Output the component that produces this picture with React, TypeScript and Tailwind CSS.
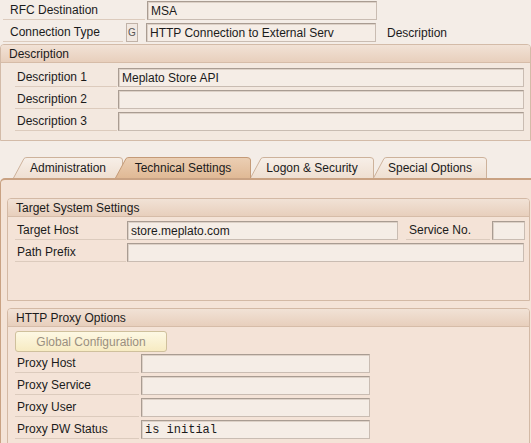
import React from "react";

const font = { fontFamily: '"Liberation Sans", Arial, sans-serif' };

function Field({ w, text, mono }: { w: string; text?: string; mono?: boolean }) {
  return (
    <div
      className={`${w} h-[19px] border border-t-[#a99c92] border-l-[#a99c92] border-r-[#c9bcb2] border-b-[#c9bcb2] bg-[#f5ede6] shadow-[inset_1px_1px_0_#ddd1c7] flex items-center pl-[3px] overflow-hidden whitespace-nowrap`}
    >
      {text && (
        <span
          className="text-[12px]"
          style={mono ? { fontFamily: '"Liberation Mono", "Courier New", monospace' } : undefined}
        >
          {text}
        </span>
      )}
    </div>
  );
}

function Label({ w, text, pl = "pl-[2px]" }: { w: string; text: string; pl?: string }) {
  return (
    <div className={`${w} h-[19px] border-b border-[#dccbbd] flex items-center ${pl} whitespace-nowrap`}>
      {text}
    </div>
  );
}

function GroupHeader({ title }: { title: string }) {
  return (
    <div className="h-[18px] flex items-center pl-[8px] bg-gradient-to-b from-[#f1e2d6] to-[#e8cfbc] border-b border-[#d6bca8] rounded-t-[3px]">
      {title}
    </div>
  );
}

function Tab({ label, w, active, ml, z }: { label: string; w: number; active?: boolean; ml: string; z: string }) {
  const h = 21;
  const s = 11;
  const id = active ? "ga" : "gi" + label.length;
  return (
    <div className={`relative ${ml} ${z} h-[21px] flex items-center justify-center`} style={{ width: w }}>
      <svg className="absolute inset-0" width={w} height={h} viewBox={`0 0 ${w} ${h}`}>
        <defs>
          <linearGradient id={id} x1="0" y1="0" x2="0" y2="1">
            <stop offset="0" stopColor={active ? "#ebcfb4" : "#f7efe8"} />
            <stop offset="1" stopColor={active ? "#e0b995" : "#efdfd1"} />
          </linearGradient>
        </defs>
        <path
          d={`M0.5 ${h} L${s} 1.5 Q${s + 1} 0.5 ${s + 3} 0.5 L${w - 4} 0.5 Q${w - 0.5} 0.5 ${w - 0.5} 3 L${w - 0.5} ${h}`}
          fill={`url(#${id})`}
          stroke={active ? "#c49a77" : "#cdb29b"}
          strokeWidth="1"
        />
      </svg>
      <span className="relative text-[12px] text-[#1b1b1b]">{label}</span>
    </div>
  );
}

export default function App() {
  return (
    <div className="w-[531px] h-[443px] overflow-hidden bg-[#f4ede7] text-[12px] text-[#1b1b1b]" style={font}>
      {/* Top rows */}
      <div className="flex items-center pt-[1px]">
        <Label w="w-[142px] ml-[3px]" text="RFC Destination" pl="pl-[7px]" />
        <div className="ml-[2px]">
          <Field w="w-[230px]" text="MSA" />
        </div>
      </div>
      <div className="flex items-center mt-[3px]">
        <Label w="w-[120px] ml-[3px]" text="Connection Type" pl="pl-[7px]" />
        <div className="ml-[3px] w-[12px] h-[19px] border border-[#c0b2a7] bg-[#f1e8e1] flex items-center justify-center text-[10px] text-[#555]">
          G
        </div>
        <div className="ml-[8px]">
          <Field w="w-[230px]" text="HTTP Connection to External Serv" />
        </div>
        <div className="ml-[11px]">Description</div>
      </div>

      {/* Description group */}
      <div className="mt-[2px] border border-[#d3bba8] rounded-t-[4px] bg-[#f3e8df] h-[97px]">
        <GroupHeader title="Description" />
        <div className="pt-[5px] flex flex-col gap-[3px]">
          {[
            ["Description 1", "Meplato Store API"],
            ["Description 2", ""],
            ["Description 3", ""],
          ].map(([l, v]) => (
            <div key={l} className="flex items-center">
              <Label w="w-[102px] ml-[14px]" text={l} />
              <div className="ml-[1px]">
                <Field w="w-[406px]" text={v} />
              </div>
            </div>
          ))}
        </div>
      </div>

      {/* Tabs */}
      <div className="mt-[16px] flex items-end pl-[13px]">
        <Tab label="Administration" w={110} ml="ml-0" z="z-0" />
        <Tab label="Technical Settings" w={136} active ml="-ml-[8px]" z="z-10" />
        <Tab label="Logon & Security" w={124} ml="-ml-[1px]" z="z-0" />
        <Tab label="Special Options" w={114} ml="-ml-[1px]" z="z-0" />
      </div>

      {/* Tab content panel */}
      <div className="border-t-2 border-l border-[#c9a283] rounded-tl-[5px] bg-[#f4e3d7] h-[300px] pt-[18px]">
        <div className="ml-[6px] mr-[1px] border border-[#d3b9a5] rounded-t-[4px] bg-[#f4e3d7] h-[103px]">
          <GroupHeader title="Target System Settings" />
          <div className="pt-[4px] flex flex-col gap-[3px]">
            <div className="flex items-center">
              <Label w="w-[111px] ml-[7px]" text="Target Host" />
              <div className="ml-[1px]">
                <Field w="w-[271px]" text="store.meplato.com" />
              </div>
              <Label w="w-[84px] ml-[8px]" text="Service No." pl="pl-[3px]" />
              <div className="ml-[2px]">
                <Field w="w-[33px]" />
              </div>
            </div>
            <div className="flex items-center">
              <Label w="w-[111px] ml-[7px]" text="Path Prefix" />
              <div className="ml-[1px]">
                <Field w="w-[397px]" />
              </div>
            </div>
          </div>
        </div>

        <div className="mt-[7px] ml-[6px] mr-[1px] border border-[#d3b9a5] rounded-t-[4px] bg-[#f4e3d7] h-[140px]">
          <GroupHeader title="HTTP Proxy Options" />
          <div className="pt-[4px] pl-[7px]">
            <div className="w-[152px] h-[21px] rounded-[3px] border border-[#cfc09c] bg-gradient-to-b from-[#fdf8e4] to-[#f7ebc2] flex items-center justify-center text-[#9a8f80]">
              Global Configuration
            </div>
          </div>
          <div className="pt-[2px] flex flex-col gap-[3px]">
            {[
              ["Proxy Host", "", false],
              ["Proxy Service", "", false],
              ["Proxy User", "", false],
              ["Proxy PW Status", "is initial", true],
            ].map(([l, v, m]) => (
              <div key={l as string} className="flex items-center">
                <Label w="w-[124px] ml-[7px]" text={l as string} pl="pl-[2px]" />
                <div className="ml-[2px]">
                  <Field w="w-[229px]" text={v as string} mono={m as boolean} />
                </div>
              </div>
            ))}
          </div>
        </div>
      </div>
    </div>
  );
}
